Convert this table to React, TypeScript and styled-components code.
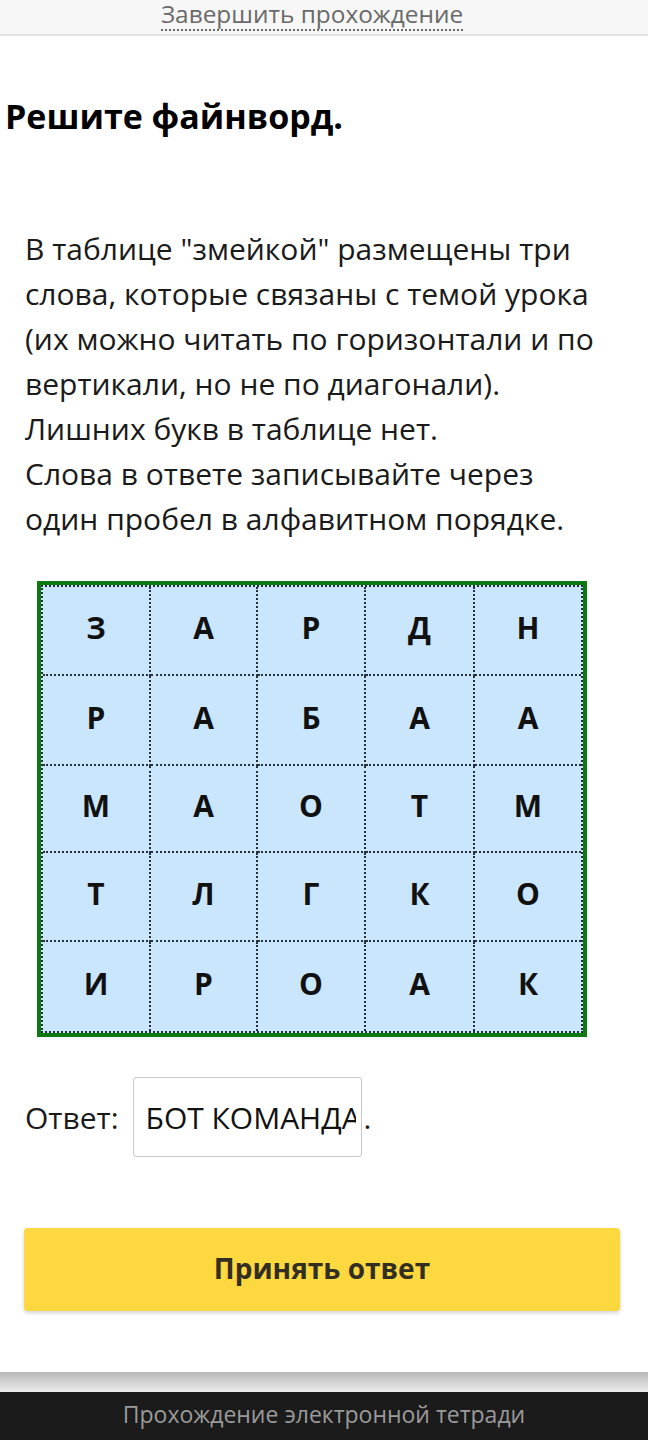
import React from "react";
import styled, { createGlobalStyle } from "styled-components";

const Global = createGlobalStyle`
  html, body { margin: 0; padding: 0; background: #fff; }
  body { font-family: "Open Sans", "Noto Sans", sans-serif; color: #111; }
  * { box-sizing: border-box; }
`;

const Page = styled.div`
  width: 648px;
  display: flex;
  flex-direction: column;
`;

const TopBar = styled.div`
  height: 36px;
  background: #f7f7f7;
  border-bottom: 2px solid #e4e4e4;
  display: flex;
  justify-content: center;
  align-items: flex-start;
  padding-right: 24px;
`;

const FinishLink = styled.span`
  font-size: 24.4px;
  line-height: 30px;
  color: #6a6a6a;
  border-bottom: 2px dotted #6a6a6a;
  margin-top: -1px;
`;

const Heading = styled.h1`
  margin: 58px 0 0 5px;
  font-size: 34px;
  line-height: 44px;
  font-weight: 700;
  color: #000;
`;

const Text = styled.p`
  margin: 88px 25px 0 25px;
  font-size: 30px;
  line-height: 45px;
  color: #1a1a1a;
`;

const Line = styled.span`
  display: block;
  white-space: nowrap;
`;

const Board = styled.div`
  margin: 40px 0 0 37px;
  width: 550px;
  height: 456px;
  border: 4px solid #0c7a10;
  background: #c9e6fd;
`;

const Grid = styled.div`
  height: 100%;
  border: 2px dotted #28303a;
  display: grid;
  grid-template-columns: 108px 107px 108px 109px 1fr;
  grid-template-rows: 89px 90px 87px 89px 1fr;
`;

const Cell = styled.div<{ $lastCol: boolean; $lastRow: boolean }>`
  border-right: ${(p) => (p.$lastCol ? "none" : "2px dotted #28303a")};
  border-bottom: ${(p) => (p.$lastRow ? "none" : "2px dotted #28303a")};
  display: flex;
  align-items: center;
  justify-content: center;
  font-size: 30px;
  font-weight: 700;
  color: #111;
  padding-bottom: 6px;
`;

const AnswerRow = styled.div`
  margin: 40px 0 0 25px;
  display: flex;
  align-items: center;
  font-size: 30px;
  color: #1a1a1a;
`;

const AnswerInput = styled.div`
  margin-left: 14px;
  width: 229px;
  height: 80px;
  border: 1px solid #c8c8c8;
  border-radius: 3px;
  display: flex;
  align-items: center;
  padding: 0 5px 0 12px;
`;

const InputValue = styled.span`
  overflow: hidden;
  white-space: nowrap;
  font-size: 30px;
  color: #111;
`;

const Dot = styled.span`
  margin-left: 2px;
`;

const SubmitButton = styled.button`
  margin: 71px 28px 0 24px;
  height: 83px;
  border: none;
  border-radius: 4px;
  background: #fdd83e;
  box-shadow: 0 2px 4px rgba(0, 0, 0, 0.18);
  font-family: "Open Sans", sans-serif;
  font-size: 28px;
  font-weight: 700;
  color: #332e22;
  padding-bottom: 4px;
`;

const Spacer = styled.div`
  height: 61px;
`;

const Shade = styled.div`
  height: 20px;
  background: linear-gradient(#b8b8b8, #ececec);
`;

const Footer = styled.div`
  height: 48px;
  background: #1b1b1b;
  color: #9a9a9a;
  font-size: 23px;
  display: flex;
  align-items: center;
  justify-content: center;
  padding-bottom: 4px;
`;

const letters = [
  ["З", "А", "Р", "Д", "Н"],
  ["Р", "А", "Б", "А", "А"],
  ["М", "А", "О", "Т", "М"],
  ["Т", "Л", "Г", "К", "О"],
  ["И", "Р", "О", "А", "К"],
];

export default function App() {
  return (
    <Page>
      <Global />
      <TopBar>
        <FinishLink>Завершить прохождение</FinishLink>
      </TopBar>
      <Heading>Решите файнворд.</Heading>
      <Text>
        <Line>В таблице "змейкой" размещены три</Line>
        <Line>слова, которые связаны с темой урока</Line>
        <Line>(их можно читать по горизонтали и по</Line>
        <Line>вертикали, но не по диагонали).</Line>
        <Line>Лишних букв в таблице нет.</Line>
        <Line>Слова в ответе записывайте через</Line>
        <Line>один пробел в алфавитном порядке.</Line>
      </Text>
      <Board>
        <Grid>
          {letters.map((row, r) =>
            row.map((l, c) => (
              <Cell key={`${r}-${c}`} $lastCol={c === 4} $lastRow={r === 4}>
                {l}
              </Cell>
            ))
          )}
        </Grid>
      </Board>
      <AnswerRow>
        Ответ:
        <AnswerInput>
          <InputValue>БОТ КОМАНДА РОБОТ</InputValue>
        </AnswerInput>
        <Dot>.</Dot>
      </AnswerRow>
      <SubmitButton>Принять ответ</SubmitButton>
      <Spacer />
      <Shade />
      <Footer>Прохождение электронной тетради</Footer>
    </Page>
  );
}
